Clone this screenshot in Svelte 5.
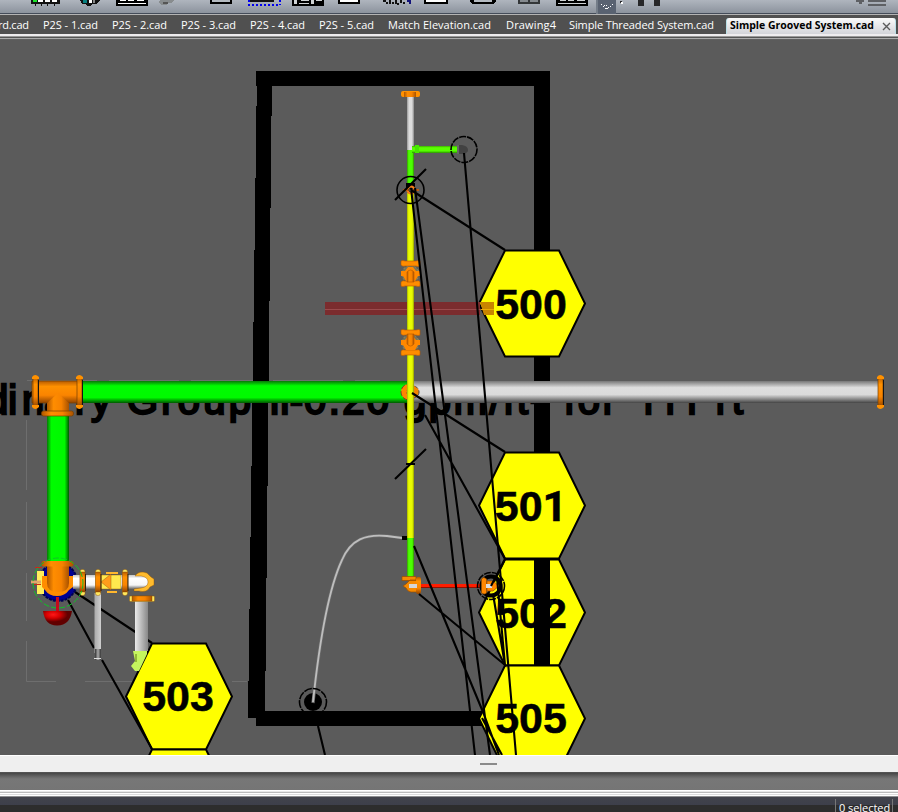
<script>
  const tabs = [
    { name: 'rd.cad', w: 43, tw: 31 }, { name: 'P2S - 1.cad', w: 69, tw: 55 }, { name: 'P2S - 2.cad', w: 69, tw: 55 },
    { name: 'P2S - 3.cad', w: 69, tw: 55 }, { name: 'P2S - 4.cad', w: 69, tw: 55 }, { name: 'P2S - 5.cad', w: 69, tw: 55 },
    { name: 'Match Elevation.cad', w: 118, tw: 103 }, { name: 'Drawing4', w: 63, tw: 50 }, { name: 'Simple Threaded System.cad', w: 157, tw: 145 }
  ];
  const hexBack = [[532, 250], [532, 452]];
  const hexFront = [[532, 665], [179, 643], [179, 749]];
  const hex = ([cx, y]) => `${cx - 53},${y + 53.5} ${cx - 27},${y + .5} ${cx + 27},${y + .5} ${cx + 53},${y + 53.5} ${cx + 27},${y + 106.5} ${cx - 27},${y + 106.5}`;
</script>

<main>
  <div class="toolbar">
    <svg width="898" height="14" shape-rendering="crispEdges">
      <path d="M598 0H616V14H598Z" fill="#596271" />
      <path d="M596 0h2v14h-2z" fill="#747d89" />
      <path d="M31 0h29v4H31z" fill="#111" /><path d="M33 0h4v2h-4z" fill="#18e529" /><path d="M38 0h5v2h-5zm7 0h5v2h-5zm7 0h5v2h-5z" fill="#fff" /><path d="M35 4h1v2h-1zm6 0h1v2h-1zm6 0h1v2h-1zm7 0h1v2h-1z" fill="#111" />
      <path d="M80 0h20l-4 4h-3l-3 2h-3l-2-2h-3z" fill="#111" /><path d="M83 0h4v3h-4z" fill="#078080" /><path d="M89 0h3v3h-3z" fill="#fff" /><path d="M93 0h2v3h-2z" fill="#888" />
      <path d="M116 0h32v6h-32z" fill="#000" /><path d="M118 3h28v1h-28zm2-3h6v1h-6zm8 0h6v1h-6zm9 0h7v1h-7z" fill="#fff" />
      <path d="M160 0h15l-4 3h-3l-2 2h-4l-3-2z" fill="#888c8e" /><path d="M163 2h5v2h-5z" fill="#555" />
      <path d="M210 0h22v4h-22z" fill="#000" /><path d="M212 0h18v2h-18z" fill="#b4bac0" />
      <path d="M250 0h24v2h-24z" fill="#111" /><path d="M248 5h32M248.5 0v5m31-5v5" stroke="#0000ed" stroke-width="2" stroke-dasharray="2 2" />
      <path d="M292 0h32v6h-32z" fill="#000" /><path d="M294 0h3v4h-3zm7 0h8v1h-8zm-2 3h10v1h-10zm12-3h3v4h-3zm5 0h6v1h-6z" fill="#d0d3d5" />
      <path d="M338 0h22v4h-22z" fill="#000" /><path d="M340 0h18v2h-18z" fill="#fff" />
      <path d="M383 0h3v2h2v2h-2v-2h-3zm6 0h2v4h-2zm3 2h2v2h-2zm3-2h2v4h-2zm2 3h2v2h-2zm3-3h2v3h-2zm3 2h2v2h-2z" fill="#111" /><path d="M407 0h4v4h-2v-2h-2z" fill="#12127a" />
      <path d="M424 0h24v4h-24z" fill="#000" /><path d="M426 0h20v2h-20z" fill="#fff" />
      <path d="M470 0h26v2l-3 2h-20l-3-2z" fill="#000" /><path d="M474 0h18v2h-18z" fill="#b5bbc2" />
      <path d="M518 0h22v4h-22z" fill="#333638" /><path d="M520 0h8v2h-8zm10 0h8v2h-8z" fill="#858a8f" />
      <path d="M556 0h32v6h-32z" fill="#000" /><path d="M558 3h28v1h-28zm2-3h6v1h-6zm8 0h6v1h-6zm9 0h8v1h-8z" fill="#cfd2d4" />
      <path d="M601 4h1v1h-1zm2 2h1v1h-1zm2 2h1v1h-1zm1-3h1v1h-1zm-2 0h1v1h-1zm4 2h1v1h-1zm2-1h1v1h-1zm2-2h1v1h-1zm-6 4h2v1h-2z" fill="#fff" />
      <path d="M620 1h2v2h-2zm18-1h6v6h-6zm16 0h6v6h-6z" fill="#272729" />
      <path d="M621 2h2v2h-2z" fill="#fff" /><path d="M856 0h8v2h-2v2h-3V2h-3zm12 0h18v2h-18zm0 4h18v2h-18z" fill="#5e6064" />
    </svg>
  </div>
  <nav>
    {#each tabs as t, i}
      <div class="tab" class:first={i === 0} style:width="{t.w}px"><svg height="19" width={t.tw + 2}><text x="0" y="14" textLength={t.tw}>{t.name}</text></svg></div>
    {/each}
    <div class="active"><svg height="16" width="147"><text x="0" y="11" textLength="144" lengthAdjust="spacingAndGlyphs">Simple Grooved System.cad</text></svg><svg class="close" width="9" height="9"><path d="M1 1L8 8M8 1L1 8" stroke="#5a5a5a" stroke-width="1.4" /></svg></div>
  </nav>
  <div class="rule"></div>

  <svg class="drawing" width="898" height="715" viewBox="0 40 898 715">
    <defs>
      <linearGradient id="greenH" x2="0" y2="1"><stop stop-color="#087808" /><stop offset=".22" stop-color="#00fc00" /><stop offset=".75" stop-color="#00fa00" /><stop offset="1" stop-color="#005800" /></linearGradient>
      <linearGradient id="greenV"><stop stop-color="#087808" /><stop offset=".2" stop-color="#00fc00" /><stop offset=".8" stop-color="#00f800" /><stop offset="1" stop-color="#005800" /></linearGradient>
      <linearGradient id="greyH" x2="0" y2="1"><stop stop-color="#777" /><stop offset=".3" stop-color="#dedede" /><stop offset=".62" stop-color="#dadada" /><stop offset="1" stop-color="#444" /></linearGradient>
      <linearGradient id="whiteH" x2="0" y2="1"><stop stop-color="#c4c4c4" /><stop offset=".25" stop-color="#fff" /><stop offset=".72" stop-color="#f6f6f6" /><stop offset="1" stop-color="#656565" /></linearGradient>
      <linearGradient id="whiteV"><stop stop-color="#aaa" /><stop offset=".28" stop-color="#fff" /><stop offset=".72" stop-color="#fafafa" /><stop offset="1" stop-color="#888" /></linearGradient>
      <linearGradient id="greyV"><stop stop-color="#999" /><stop offset=".3" stop-color="#ddd" /><stop offset=".7" stop-color="#ddd" /><stop offset="1" stop-color="#888" /></linearGradient>
      <linearGradient id="darkV"><stop stop-color="#333" /><stop offset=".5" stop-color="#aaa" /><stop offset="1" stop-color="#333" /></linearGradient>
      <linearGradient id="orangeH" x2="0" y2="1"><stop stop-color="#b95c00" /><stop offset=".25" stop-color="#ff9100" /><stop offset=".65" stop-color="#fa8400" /><stop offset="1" stop-color="#8f4300" /></linearGradient>
      <linearGradient id="orangeV"><stop stop-color="#b05600" /><stop offset=".3" stop-color="#ff8d00" /><stop offset=".65" stop-color="#f78200" /><stop offset="1" stop-color="#a85200" /></linearGradient>
      <linearGradient id="yellowV"><stop stop-color="#a5b200" /><stop offset=".25" stop-color="#ecff00" /><stop offset=".75" stop-color="#e6f800" /><stop offset="1" stop-color="#909b00" /></linearGradient>
      <linearGradient id="limeV"><stop stop-color="#359c00" /><stop offset=".25" stop-color="#4dff00" /><stop offset=".75" stop-color="#4aff00" /><stop offset="1" stop-color="#308c00" /></linearGradient>
      <linearGradient id="limeH" x2="0" y2="1"><stop stop-color="#3cad00" /><stop offset=".25" stop-color="#5cff00" /><stop offset=".7" stop-color="#55ff00" /><stop offset="1" stop-color="#2c9000" /></linearGradient>
      <radialGradient id="red" cx=".35" cy=".25"><stop stop-color="#ff1818" /><stop offset=".5" stop-color="#d40000" /><stop offset="1" stop-color="#610000" /></radialGradient>
    </defs>
    <path fill="#5b5b5b" d="M0 40H898V755H0z" />
    <g stroke="#6e6e6e" fill="none"><path d="M26.5 420V560M26.5 573V621M26.5 641V681.5H65M85 681.5H140M232 681.5H247M27 380.5H380" stroke-dasharray="70 12" /></g>
    <g shape-rendering="crispEdges">
      <path d="M256 71H550V86H256zM534 71H550V665H534zM256 711H486V726H256zM257 71H272L265 718H248z" />
    </g>
    <g class="note">
      <text x="-14" y="413.5">di</text><text x="22" y="413.5">na</text><text x="75" y="413.5" textLength="36">ry</text>
      <text x="127" y="413.5" textLength="124">Group</text><text x="269" y="413.5" textLength="34">II-</text><text x="304" y="413.5" textLength="85">0.20</text>
      <text x="404" y="413.5" textLength="140">gpm/ft²</text><text x="564" y="413.5" textLength="52">for</text>
      <text x="636" y="413.5" class="plain" textLength="66">111</text><text x="715" y="413.5" textLength="28">ft</text>
    </g>

    <path fill="url(#greenH)" d="M82 381H409V403H82z" /><path fill="url(#greyH)" d="M409 381H878V403H409z" />
    <path fill="url(#greenV)" d="M47 416H69V563H47z" />
    <g class="outline">
      <path fill="url(#orangeH)" d="M32 381H80V403H32z" /><path fill="url(#orangeV)" d="M47 403L58 393 69 403V412H47z" stroke="none" />
      <path fill="url(#orangeH)" d="M33 377H38V407H33zM77 377H82V407H77zM878 377H883V407H878z" /><path d="M32 379v-2q3-4 7 0v2zm0 26v2q3 4 7 0v-2zm44-26v-2q3-4 7 0v2zm0 26v2q3 4 7 0v-2zm801-26v-2q3-4 7 0v2zm0 26v2q3 4 7 0v-2z" fill="#ff9100" stroke="none" />
      <rect x="41.5" y="411" width="32" height="5" rx="2" fill="url(#orangeV)" />
    </g>
    <path fill="#151515" d="M38 380h1v25h-1zm44 0h1v25h-1zm801 0h1v25h-1z" />

    <!-- branch from the main run -->
    <g shape-rendering="crispEdges">
      <path fill="url(#greyV)" d="M407 96H414V150H407z" /><path fill="url(#limeV)" d="M407 150H414V187H407zM407 538H414V578H407z" />
      <path fill="url(#limeH)" d="M412 146H457V153H412z" />
    </g>
    <path d="M415 145h4v8h-4z" fill="#45e800" />
    <rect x="401" y="91" width="19" height="6" rx="2" fill="#ff9100" /><path fill="url(#orangeV)" d="M404 92H416V97H404z" />
    <circle cx="409" cy="392" r="8" fill="#ff8500" stroke="#804020" stroke-dasharray="5 2" /><circle cx="413" cy="392" r="6" fill="#f48400" stroke="#4d4644" stroke-dasharray="3 2" />
    <path fill="url(#yellowV)" d="M407 193H414V538H407z" shape-rendering="crispEdges" />

    {#each hexBack as h}<polygon points={hex(h)} class="hex" />{/each}
    <polygon points={hex([532, 559])} class="hex" /><path d="M534 559H550V665H534z" />
    {#each hexFront as h}<polygon points={hex(h)} class="hex" />{/each}
    <path d="M325 302H480V315H325z" fill="#7b2c2e" /><path d="M325 309.5H481" stroke="#9a4a4c" /><path d="M480 302H494V315H484z" fill="#c88500" /><path d="M481 309.5H494" stroke="#eaac00" />
    <path fill="url(#yellowV)" d="M407 298H414V320H407z" shape-rendering="crispEdges" />
    <g class="num">
      <text x="531" y="319">500</text><text x="531" y="521">50<tspan class="one">1</tspan></text><text x="531" y="627.5">502</text><text x="531" y="733">505</text><text x="178" y="711">503</text>
    </g>

    <!-- couplings -->
    {#each [261, 330] as y, i}
      <g transform="translate(0 {y})">
        <circle cx="410.5" cy="13" r="8.5" fill="#77745a" stroke="#9b8d59" stroke-dasharray="2 2" />
        <path d="M401 4V0q2-1 4 0h11q3-1 4 0v5q-2 1-4 0h-11q-2 1-4-1zM401 21q2-2 4-1h11q3-1 4 1v4q-2 1-4 0h-11q-2 1-4 0z" fill="#ff8c00" stroke="#b65900" stroke-width=".6" />
        <path d="M401 10h4l3-4h5l3 4h4v5h-2l-3 5h-9l-3-5h-2z" fill="#ff8800" /><path d={i ? 'M407 4H414V14Q410.5 18 407 14z' : 'M407 21V11Q410.5 7 414 11V21z'} fill="url(#orangeV)" stroke="#b25600" stroke-width=".6" />
      </g>
    {/each}
    <path d="M402 576.5h14v4h-14zM403 586l3-2 4-4h8v12h-7q-3 0-5-4z" fill="#f68900" stroke="#974d00" stroke-width=".7" />
    <path d="M419 586H484" stroke="#8e1000" stroke-width="4" /><path d="M420 585.5H482" stroke="#ff1d00" stroke-width="3" />
    <rect x="416" y="577" width="5" height="17" rx="2" fill="url(#orangeH)" /><path d="M409 584h8v4h-8z" fill="#d6d6d6" />
    <circle cx="491" cy="586" r="9.5" fill="none" stroke="#000" stroke-width="4" />
    <path d="M481.5 579q2-3 5 0v14q-2 2-5 0zM487 581h6l6 5-6 5h-6z" fill="#ff8700" stroke="#985000" stroke-width=".7" /><path d="M486 584h6v4h-6z" fill="#ddd" />
    <path d="M457 145h5q6 1 6 5 0 3-5 4h-6z" fill="#424242" /><path d="M457 145h2v9h-2z" fill="#666" />
    <path d="M406 183h9v7h-9z" /><circle cx="411" cy="190" r="4.5" fill="#f37c15" /><path d="M403 190h16" stroke="#bf5c13" stroke-width="2" /><circle cx="411" cy="190" r="2" fill="#999" stroke="#222" />

    <circle cx="313" cy="702" r="9" /><path d="M313 703C318 655 327 592 342 560C351 539 366 534 387 536L405 538" fill="none" stroke="#6c6c6c" stroke-width="3.2" /><path d="M313 702C318 655 327 592 342 560C351 539 366 534 387 536L402 538" fill="none" stroke="#bebebe" stroke-width="1.8" /><path d="M402 536h5v4h-5z" />
    <path d="M411 190L505 250M412 393L505 452M464 153L516 755M411 188L475 755M415 188L490 755M425 415L505 559 491 586M414 546L483 712 499 755M482 718L502 755M419 594L505 665 493 594M318 726L325 755M395 200L426 169M395 479L426 449M406 464H415M497 578L505 665M75 592L152 643M68 600L94 648M102 660L152 749" class="lead" />
    <g fill="none" stroke="#000" stroke-width="1.6"><circle cx="464" cy="149.5" r="13" stroke-dasharray="7 1" /><circle cx="410.5" cy="190" r="13.5" /><circle cx="491" cy="586" r="13.5" stroke-dasharray="7 1" /><circle cx="313" cy="702" r="13.5" stroke-dasharray="8 1" /></g>

    <!-- riser assembly -->
    <circle cx="58" cy="582" r="19" fill="#000092" stroke="#000052" stroke-width="2" stroke-dasharray="3 1" />
    <path d="M37 571h7v23h-7z" fill="#ffed5b" /><path d="M31 580.5h10v3H31z" fill="#e0a66b" /><path d="M34 584h7v1h-7zM35 567h7v1h-7z" fill="#cc2912" />
    <path fill="url(#whiteH)" d="M73 575H142Q149 576 149 582T142 589H73z" /><path fill="url(#whiteV)" d="M94.5 593H101V653H94.5zM135 600H148V651H135z" /><path d="M95 649h6v11h-6z" fill="url(#darkV)" /><path d="M94 658.5h7" stroke="#ddd" />
    <path d="M133 651h14v3l-8 17h-4l-4-5 4-5z" fill="#c4f55e" /><path d="M135 654h2v8h-2z" fill="#92b936" />
    <g stroke="#8b4b00" stroke-width=".4">
      <path d="M101 575h20v14h-20z" fill="#ffe84e" /><path d="M101 582l10-8v16z" fill="#ff9c1b" />
      {#each [80, 95.5, 122.5] as x}<rect {x} y="569.5" width="5" height="26" rx="2" fill="#ffe75d" /><rect {x} y="572" width="5" height="20" fill="url(#orangeH)" />{/each}
      <path d="M135 576q4-6 12-3l4 4 3 2v6l-4 2q-3 6-11 4h-5v-2l7-1q7-1 7-6t-7-6z" fill="#ffbb2d" /><rect x="129.5" y="596" width="25" height="5.5" rx="1" fill="#ffe65a" /><path d="M132 596h20v5h-20z" fill="url(#orangeV)" />
    </g>
    <path d="M106 573h12M107 592h10" stroke="#ffb72d" stroke-width="2" /><path d="M85.5 574v17M101 574v17M128 574v17" stroke="#33200a" />
    <path d="M42 576h31v11l-4 3q-4 6-12 6-8 0-12-6l-3-3z" fill="#ff8d00" /><path d="M47 564H69V583Q69 592 58 592T47 583z" fill="url(#orangeV)" /><rect x="41.5" y="561" width="32" height="5.5" rx="2" fill="url(#orangeV)" />
    <circle cx="58" cy="583" r="25" fill="none" stroke="#0fc326" stroke-dasharray="6 2" /><path d="M57.5 597v15" stroke="#c4091b" stroke-width="3" /><path d="M43 611H72Q70 625 57.5 625.5T43 611z" fill="url(#red)" />
  </svg>

  <div class="splitter"><i></i></div><div class="panel"></div><div class="lines"></div>
  <footer><div class="status">0 selected</div></footer>
</main>

<style>
  :global(body) { margin: 0; overflow: hidden; }
  main { width: 898px; height: 812px; overflow: hidden; display: flex; flex-direction: column; font-family: "Open Sans", "Noto Sans", sans-serif; }
  svg { display: block; flex: none; }
  .toolbar { height: 14px; flex: none; background: linear-gradient(#afb5be, #8d949e 90%, #444c59 95%); }
  nav { height: 20px; flex: none; background: #505050; border-top: 1px solid #b3b3b3; box-sizing: border-box; display: flex; color: #fff; font-size: 11px; }
  nav svg { overflow: visible; }
  nav text { fill: #fff; }
  .tab { flex: none; }
  .first { margin-left: -2px; padding-right: 2px; box-sizing: border-box; }
  .first + .tab { margin-left: 2px; }
  .active { width: 170px; margin-top: 3px; height: 16px; box-sizing: border-box; flex: none; padding-left: 3px; display: flex; align-items: start; background: linear-gradient(#fafafa, #d3d4d9); border: solid #b9dfe6; border-width: 0 1px; border-radius: 3px 3px 0 0; font-weight: bold; }
  .active text { fill: #000; }
  .close { margin: 4px 0 0 5px; }
  .rule { height: 6px; flex: none; background: linear-gradient(#eeecee 0 2px, #999 2px 3px, #555 3px 4px, #aaa 4px 5px, #606060 5px); }
  .note text { font-family: "Liberation Sans", Arial, sans-serif; font-size: 40px; stroke: #000; stroke-width: 2.3px; }
  .note .plain { font-family: Roboto, sans-serif; }
  .hex { fill: #ff0; stroke: #000; stroke-width: 2; }
  .num { font: bold 43px "Liberation Sans", Arial, sans-serif; text-anchor: middle; stroke: #000; stroke-width: .5px; }
  .one { font-family: Roboto, sans-serif; }
  .outline { stroke: #754000; stroke-width: .7; }
  .lead { fill: none; stroke: #000; stroke-width: 2.1; }
  .splitter { height: 17px; flex: none; background: #efefef; border-top: 1px solid #fff; box-sizing: border-box; display: flex; }
  .splitter i { width: 17px; height: 2px; background: #8b8b8b; margin: 7px 0 0 480px; }
  .panel { height: 18px; flex: none; background: linear-gradient(#606060 0, #464646 1px, #696969 5px, #777 7px, #757575); }
  .lines { height: 7px; flex: none; background: linear-gradient(#fff 0 1px, #e9e9e9 1px 2px, #bbb 2px 3px, #fff 3px 4px, #ddd 4px 5px, #fff 5px 6px, #8e8f91 6px); }
  footer { height: 15px; flex: none; background: linear-gradient(#42434b, #3d3f4b 8px, #2d2d2d 8px); display: flex; justify-content: end; }
  .status { width: 58px; height: 15px; margin: 2px 5px 0 0; border: solid #777; border-width: 0 1px; padding-left: 3px; box-sizing: border-box; color: #fff; font-size: 11px; line-height: 18px; white-space: nowrap; letter-spacing: -.05px; }
</style>
